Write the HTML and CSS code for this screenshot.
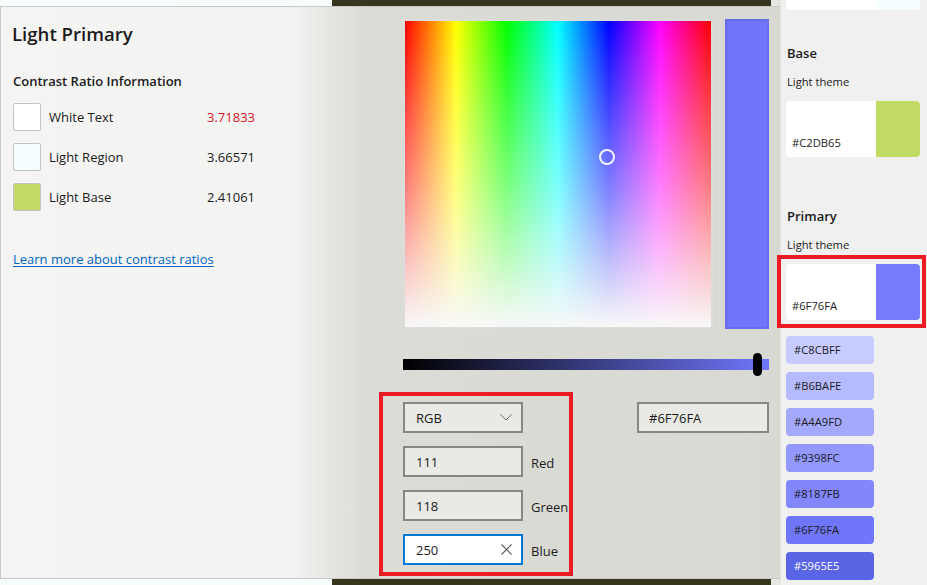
FILE: index.html
```html
<!DOCTYPE html>
<html lang="en">
<head>
<meta charset="utf-8">
<title>Light Primary</title>
<link rel="stylesheet" href="styles.css">
</head>
<body>
<div class="stage">
  <div class="panel">
    <section class="info">
      <h1 class="title">Light Primary</h1>
      <h2 class="subtitle">Contrast Ratio Information</h2>
      <div class="ratios">
        <div class="ratio"><span class="chip chip-white"></span><span class="ratio-label">White Text</span><span class="ratio-value bad">3.71833</span></div>
        <div class="ratio"><span class="chip chip-region"></span><span class="ratio-label">Light Region</span><span class="ratio-value">3.66571</span></div>
        <div class="ratio"><span class="chip chip-base"></span><span class="ratio-label">Light Base</span><span class="ratio-value">2.41061</span></div>
      </div>
      <a class="learn" href="#">Learn more about contrast ratios</a>
    </section>
    <section class="picker">
      <div class="picker-top">
        <div class="spectrum"><span class="marker"></span></div>
        <div class="preview"></div>
      </div>
      <div class="slider"><div class="track"></div><span class="thumb"></span></div>
      <div class="controls">
        <div class="field select"><span>RGB</span>
          <svg class="chevron" width="12" height="7" viewBox="0 0 12 7"><polyline points="0.5,0.5 6,6 11.5,0.5" fill="none" stroke="#6b6b6b" stroke-width="1"/></svg>
        </div>
        <div></div>
        <div class="field hex">#6F76FA</div>
        <div class="field">111</div><span class="field-label">Red</span><div></div>
        <div class="field">118</div><span class="field-label">Green</span><div></div>
        <div class="field focused"><span>250</span>
          <svg class="clear" width="11" height="11" viewBox="0 0 11 11"><path d="M0.5 0.5 L10.5 10.5 M10.5 0.5 L0.5 10.5" stroke="#5a5a5a" stroke-width="1.1" fill="none"/></svg>
        </div><span class="field-label">Blue</span><div></div>
      </div>
      <div class="annot annot-controls"></div>
    </section>
  </div>
</div>
<aside class="themes">
  <div class="card card-partial"><span class="card-hex"></span><span class="card-swatch sw-region"></span></div>
  <h3 class="group-title group-base">Base</h3>
  <div class="group-sub">Light theme</div>
  <div class="card"><span class="card-hex">#C2DB65</span><span class="card-swatch sw-base"></span></div>
  <h3 class="group-title group-primary">Primary</h3>
  <div class="group-sub">Light theme</div>
  <div class="card"><span class="card-hex">#6F76FA</span><span class="card-swatch sw-primary"></span></div>
  <ul class="shades">
    <li class="shade s1">#C8CBFF</li>
    <li class="shade s2">#B6BAFE</li>
    <li class="shade s3">#A4A9FD</li>
    <li class="shade s4">#9398FC</li>
    <li class="shade s5">#8187FB</li>
    <li class="shade s6">#6F76FA</li>
    <li class="shade s7">#5965E5</li>
  </ul>
  <div class="annot annot-card"></div>
</aside>
</body>
</html>
```

FILE: styles.css
```css
* { box-sizing: border-box; }

html, body {
  margin: 0;
  padding: 0;
}

body {
  width: 927px;
  height: 585px;
  overflow: hidden;
  display: flex;
  background: #f0f0f0;
  font-family: "Open Sans", "Noto Sans", sans-serif;
  font-size: 13px;
  color: #1b1b1b;
}

.stage {
  flex: none;
  width: 781px;
  height: 585px;
  padding: 6px 0;
  background: linear-gradient(to right, #f7fcfc 0, #f7fcfc 332px, #36361e 332px, #36361e 771px, #e6e6e2 771px);
}

.panel {
  height: 100%;
  display: flex;
  border: 1px solid #c9c9c7;
  border-right-color: #e4e4e0;
  background: linear-gradient(to right, #f4f4f3 0, #f3f3f2 290px, #e6e5e2 330px, #dcdcd7 365px, #d9d9d4 100%);
}

/* ---------- left info ---------- */
.info {
  flex: none;
  width: 402px;
  padding: 13px 0 0 11px;
}

.title {
  margin: 0;
  font-size: 18.6px;
  line-height: 28px;
  font-weight: 600;
}

.subtitle {
  margin: 23px 0 0 1px;
  font-size: 13px;
  line-height: 20px;
  font-weight: 600;
}

.ratios {
  margin: 12px 0 0 1px;
  display: flex;
  flex-direction: column;
  gap: 12px;
}

.ratio {
  display: flex;
  align-items: center;
  height: 28px;
}

.chip {
  flex: none;
  width: 28px;
  height: 28px;
  border: 1px solid #c4c4c4;
  border-radius: 2px;
}

.chip-white { background: #ffffff; }
.chip-region { background: #f5fdff; }
.chip-base { background: #c2db65; }

.ratio-label {
  width: 166px;
  padding-left: 8px;
  flex: none;
}

.ratio-value.bad { color: #d7161e; }

.learn {
  display: inline-block;
  margin: 38px 0 0 1px;
  line-height: 20px;
  color: #0067c0;
  text-decoration: underline;
  text-underline-offset: 2px;
}

/* ---------- picker ---------- */
.picker {
  position: relative;
  flex: 1;
  padding-top: 12px;
}

.picker-top {
  display: flex;
  gap: 12px;
}

.spectrum {
  position: relative;
  width: 310px;
  height: 310px;
  border: 2px solid #dcdcda;
  background:
    linear-gradient(to bottom, rgba(255,255,255,0) 0%, rgba(255,255,255,0.5) 55%, #f8f8f8 100%),
    linear-gradient(to right, #ff0000 0%, #ffff00 16.67%, #00ff00 33.33%, #00ffff 50%, #0000ff 66.67%, #ff00ff 83.33%, #ff0000 100%);
}

.marker {
  position: absolute;
  left: 194px;
  top: 128px;
  width: 16px;
  height: 16px;
  border: 2px solid rgba(255,255,255,0.92);
  border-radius: 50%;
}

.preview {
  width: 44px;
  height: 310px;
  background: #6f76fa;
  border: 2px solid #666ded;
}

.slider {
  position: relative;
  width: 366px;
  height: 23px;
  margin-top: 24px;
  display: flex;
  align-items: center;
}

.track {
  width: 100%;
  height: 11px;
  background: linear-gradient(to right, #000000, #6f76fa);
}

.thumb {
  position: absolute;
  left: 350px;
  top: 0;
  width: 9px;
  height: 23px;
  border-radius: 5px;
  background: #000;
}

.controls {
  margin-top: 26px;
  width: 366px;
  display: grid;
  grid-template-columns: 120px 1fr 132px;
  grid-auto-rows: 31px;
  row-gap: 13px;
}

.field {
  display: flex;
  align-items: center;
  justify-content: space-between;
  padding: 0 9px 0 11px;
  border: 2px solid #868684;
  background: #e9e9e5;
  line-height: 20px;
}

.field.hex { padding-left: 10px; }

.field.focused {
  background: #ffffff;
  border-color: #0078d4;
}

.field-label {
  align-self: center;
  padding: 3px 0 0 8px;
  line-height: 20px;
}

.annot {
  position: absolute;
  border: 4px solid #ed1c24;
  pointer-events: none;
}

.annot-controls {
  left: -24px;
  top: 385px;
  width: 194px;
  height: 184px;
}

/* ---------- right themes column ---------- */
.themes {
  position: relative;
  flex: 1;
  padding-left: 5px;
}

.card {
  display: flex;
  width: 134px;
  height: 56px;
  border-radius: 4px;
  overflow: hidden;
  background: #ffffff;
}

.card-partial {
  height: 10px;
  border-radius: 0 0 4px 4px;
}

.card-hex {
  flex: 1;
  align-self: flex-end;
  padding: 0 0 6px 6px;
  font-size: 11.2px;
  line-height: 16px;
}

.card-swatch {
  flex: none;
  width: 44px;
}

.sw-region { background: #f5fdff; }
.sw-base { background: #c2db65; }
.sw-primary { background: #767afd; }

.group-title {
  margin: 0;
  font-size: 13px;
  line-height: 20px;
  font-weight: 600;
  padding-left: 1px;
}

.group-base { margin-top: 33px; }
.group-primary { margin-top: 49px; }

.group-sub {
  margin: 11px 0 11px 1px;
  font-size: 11.2px;
  line-height: 16px;
}

.shades {
  list-style: none;
  margin: 16px 0 0 0;
  padding: 0;
  display: flex;
  flex-direction: column;
  gap: 8px;
}

.shade {
  width: 88px;
  height: 28px;
  border-radius: 4px;
  padding-left: 8px;
  font-size: 11.2px;
  line-height: 28px;
  color: #1b1b1b;
}

.s1 { background: #c8cbff; }
.s2 { background: #b6bafe; }
.s3 { background: #a4a9fd; }
.s4 { background: #9398fc; }
.s5 { background: #8187fb; }
.s6 { background: #6f76fa; }
.s7 { background: #5965e5; color: #ffffff; }

.annot-card {
  left: -4px;
  top: 255px;
  width: 149px;
  height: 73px;
}
```
